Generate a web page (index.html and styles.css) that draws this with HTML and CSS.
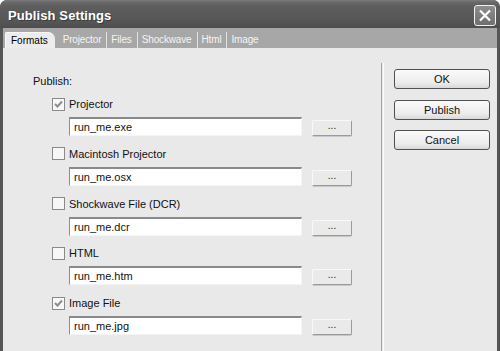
FILE: index.html
```
<!DOCTYPE html>
<html>
<head>
<meta charset="utf-8">
<link rel="stylesheet" href="styles.css">
</head>
<body>
<div class="window">
  <div class="titlebar">
    <span class="title">Publish Settings</span>
    <div class="close">
      <svg width="14" height="13" viewBox="0 0 14 13"><path d="M2 1.5 L12 11.5 M12 1.5 L2 11.5" stroke="#fff" stroke-width="2.2" fill="none"/></svg>
    </div>
  </div>
  <div class="tabs">
    <div class="tab active">Formats</div>
    <div class="tab first">Projector</div>
    <div class="tab">Files</div>
    <div class="tab">Shockwave</div>
    <div class="tab">Html</div>
    <div class="tab">Image</div>
  </div>
  <div class="body">
    <div class="left">
      <div class="heading">Publish:</div>
      <div class="item">
        <div class="check-row"><span class="cb checked"><svg width="11" height="11" viewBox="0 0 11 11"><path d="M2 5 L4.5 7.5 L9 2.5" stroke="#8d8d8d" stroke-width="2" fill="none"/></svg></span>Projector</div>
        <div class="field-row"><div class="field">run_me.exe</div><div class="dots">...</div></div>
      </div>
      <div class="item">
        <div class="check-row"><span class="cb"></span>Macintosh Projector</div>
        <div class="field-row"><div class="field">run_me.osx</div><div class="dots">...</div></div>
      </div>
      <div class="item">
        <div class="check-row"><span class="cb"></span>Shockwave File (DCR)</div>
        <div class="field-row"><div class="field">run_me.dcr</div><div class="dots">...</div></div>
      </div>
      <div class="item">
        <div class="check-row"><span class="cb"></span>HTML</div>
        <div class="field-row"><div class="field">run_me.htm</div><div class="dots">...</div></div>
      </div>
      <div class="item">
        <div class="check-row"><span class="cb checked"><svg width="11" height="11" viewBox="0 0 11 11"><path d="M2 5 L4.5 7.5 L9 2.5" stroke="#8d8d8d" stroke-width="2" fill="none"/></svg></span>Image File</div>
        <div class="field-row"><div class="field">run_me.jpg</div><div class="dots">...</div></div>
      </div>
    </div>
    <div class="sep"></div>
    <div class="right">
      <div class="btn">OK</div>
      <div class="btn">Publish</div>
      <div class="btn">Cancel</div>
    </div>
  </div>
</div>
</body>
</html>
```
FILE: styles.css
```
html, body {
  margin: 0;
  padding: 0;
  background: #ffffff;
}
body {
  font-family: "Liberation Sans", Arial, sans-serif;
  font-size: 11px;
  color: #111;
}
.window {
  width: 500px;
  height: 351px;
  display: flex;
  flex-direction: column;
  background: #555;
  border-radius: 7px 7px 0 0;
  overflow: hidden;
}
.titlebar {
  height: 28px;
  flex: none;
  display: flex;
  align-items: center;
  justify-content: space-between;
  padding: 0 4px 0 8px;
  background: linear-gradient(#7c7c7c 0, #6a6a6a 2px, #5e5e5e 6px, #575757 20px, #4e4e4e 28px);
}
.title {
  color: #fff;
  font-weight: bold;
  font-size: 13px;
  letter-spacing: 0.1px;
  text-shadow: 1px 1px 0 #3a3a3a;
  margin-top: 2px;
}
.close {
  width: 20px;
  height: 19px;
  border: 1px solid #f2f2f2;
  border-radius: 3px;
  background: linear-gradient(#8e8e8e, #6e6e6e);
  display: flex;
  align-items: center;
  justify-content: center;
  margin-top: 3px;
}
.tabs {
  height: 20px;
  flex: none;
  margin: 0 3px;
  background: #a7a7a7;
  display: flex;
  align-items: flex-end;
  font-size: 10px;
  color: #f4f4f4;
}
.tab {
  height: 16px;
  line-height: 16px;
  padding: 0 4px;
  border-left: 1px solid #e2e2e2;
  letter-spacing: -0.15px;
}
.tab + .tab {
  margin-left: 1px;
}
.tab.first {
  border-left: none;
  margin-left: 4px;
}
.tab.active {
  margin-left: 2px;
  background: #ececec;
  color: #000;
  border-left: 1px solid #fafafa;
  border-top: 1px solid #fafafa;
  border-radius: 2px 7px 0 0;
  height: 15px;
  padding: 0 7px 0 5px;
  letter-spacing: 0;
}
.body {
  flex: 1;
  display: flex;
  margin: 0 3px;
  background: #e9e9e9;
}
.left {
  width: 348px;
  padding: 26px 0 0 30px;
}
.heading {
  height: 14px;
  line-height: 14px;
  margin-bottom: 6px;
}
.item {
  height: 49.75px;
  padding-left: 19px;
}
.check-row {
  height: 20px;
  display: flex;
  align-items: center;
}
.cb {
  width: 11px;
  height: 11px;
  border: 1px solid #8a8a8a;
  background: #f7f7f7;
  margin-right: 4px;
  display: flex;
  align-items: center;
  justify-content: center;
}
.field-row {
  margin-top: 3px;
  display: flex;
  align-items: flex-end;
}
.field {
  width: 227px;
  height: 16px;
  line-height: 16px;
  margin-left: 17px;
  padding-left: 4px;
  background: #fff;
  border-top: 2px solid #8a8a8a;
  border-left: 1px solid #8e8e8e;
  border-right: 1px solid #f4f4f4;
  border-bottom: 1px solid #f4f4f4;
  font-size: 11px;
}
.dots {
  width: 38px;
  height: 14px;
  margin-left: 10px;
  border: 1px solid #f8f8f8;
  border-right-color: #9a9a9a;
  border-bottom-color: #9a9a9a;
  border-radius: 2px;
  background: #eaeaea;
  box-shadow: 0 1px 0 #c8c8c8;
  text-align: center;
  line-height: 10px;
  font-size: 10px;
  color: #222;
}
.sep {
  width: 1px;
  margin-top: 15px;
  border-left: 1px solid #a4a4a4;
  border-right: 1px solid #fbfbfb;
}
.right {
  flex: 1;
  padding: 21px 0 0 10px;
  display: flex;
  flex-direction: column;
  gap: 10.5px;
}
.btn {
  width: 94px;
  height: 18px;
  line-height: 18px;
  border: 1px solid #505050;
  border-radius: 3px;
  background: linear-gradient(#fafafa, #ececec 70%, #d8d8d8);
  text-align: center;
  font-size: 11px;
  color: #111;
}
```
